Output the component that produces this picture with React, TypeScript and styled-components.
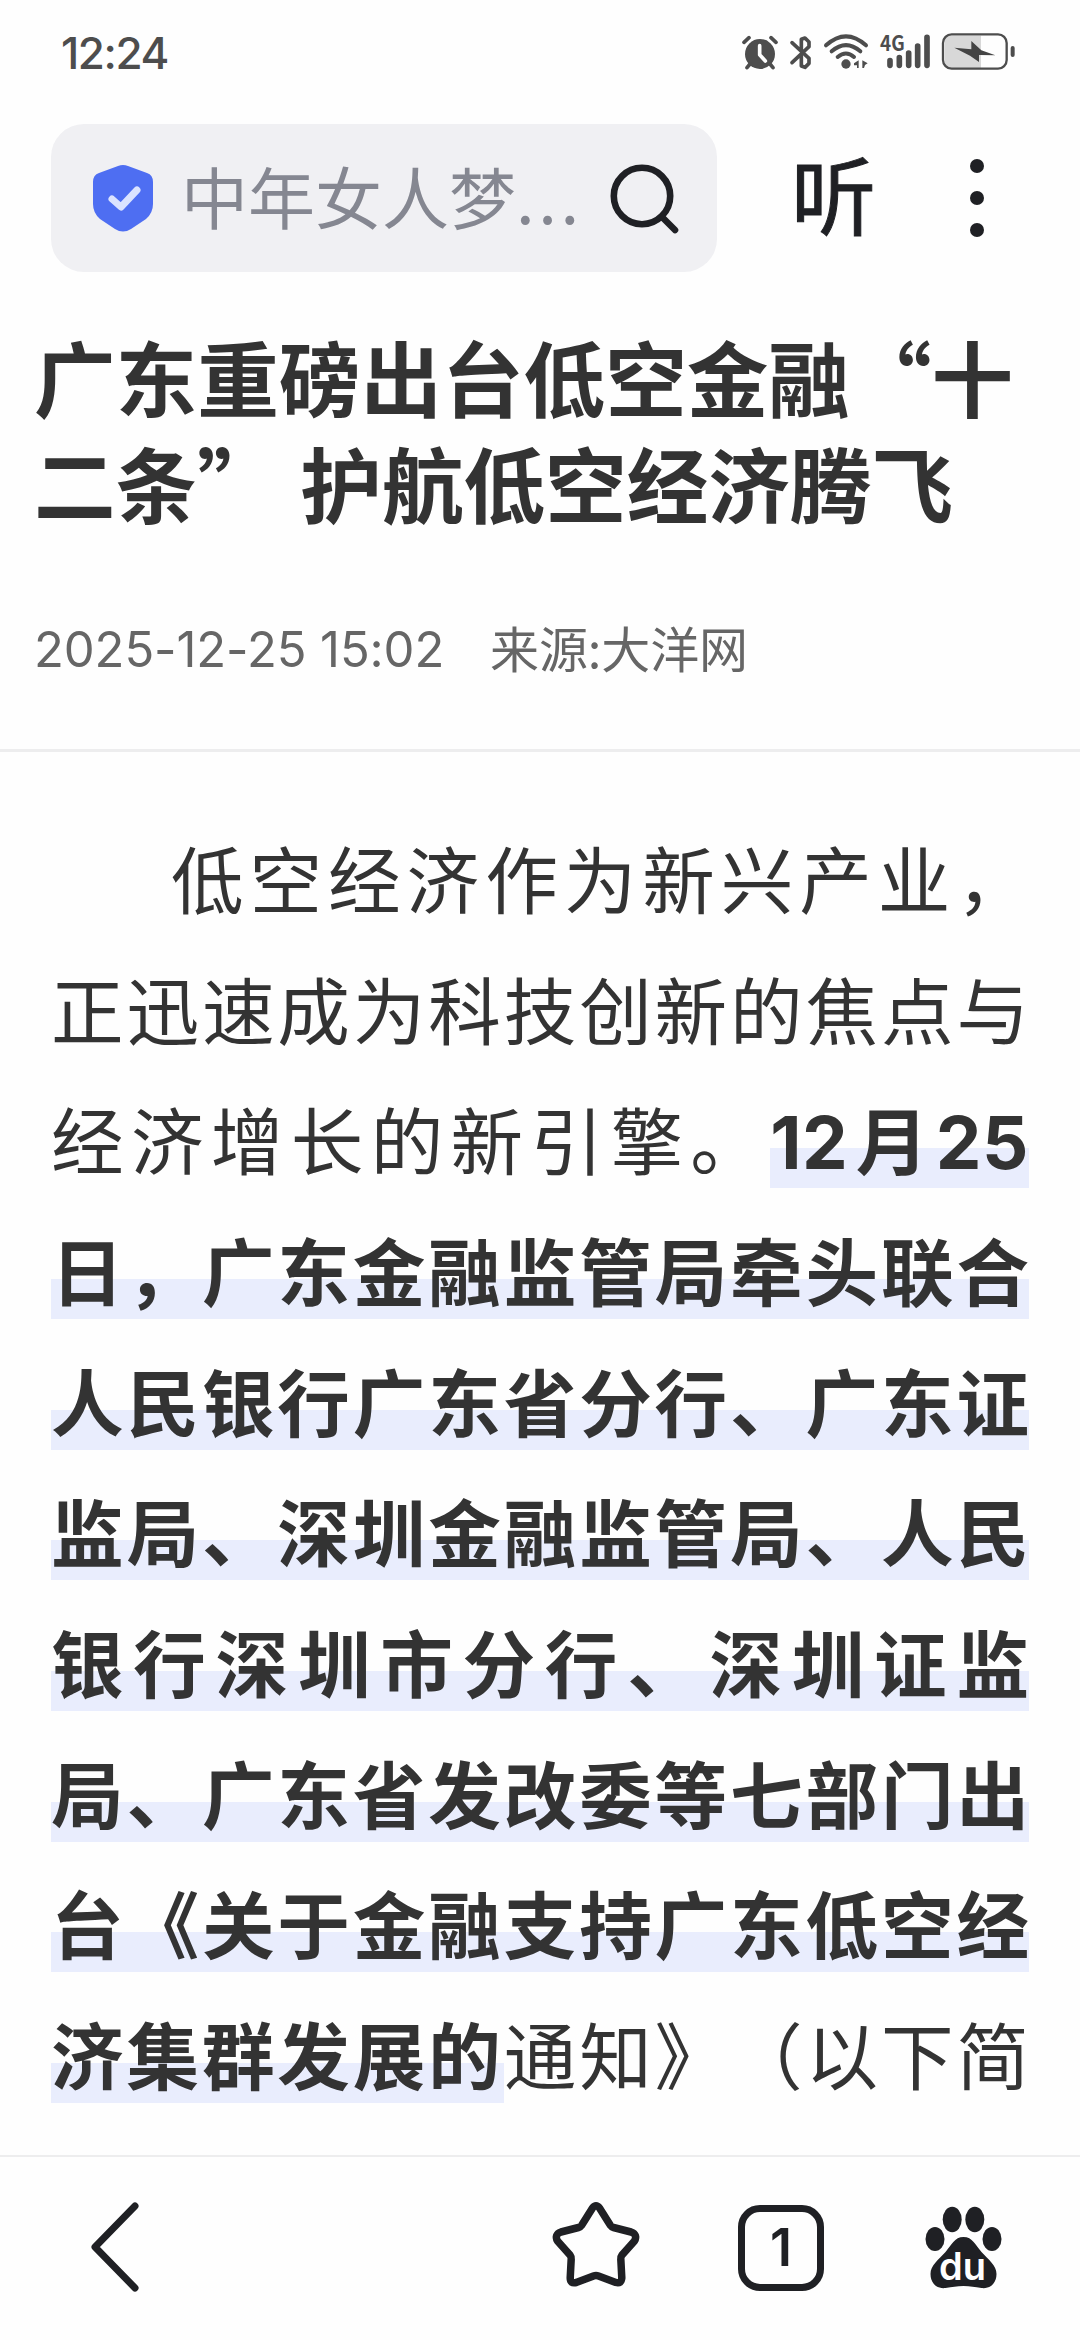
import React from "react";
import styled, { createGlobalStyle } from "styled-components";

const GlobalStyle = createGlobalStyle`
  * { box-sizing: border-box; }
  body { margin: 0; background: #fefefe; }
`;

const Screen = styled.div`
  width: 1080px;
  height: 2340px;
  display: flex;
  flex-direction: column;
  overflow: hidden;
  background: #fefefe;
  color: #333;
  font-family: "Noto Sans CJK SC", sans-serif;
  text-spacing-trim: space-all;
`;

const StatusBar = styled.header`
  height: 104px;
  flex: none;
  display: flex;
  justify-content: space-between;
  padding: 0 62px 0 61px;
  color: #4d4d4d;
`;

const Clock = styled.time`
  font-family: Inter, sans-serif;
  font-size: 44px;
  font-weight: 500;
  line-height: 107px;
  letter-spacing: -1.4px;
`;

const StatusIcons = styled.svg`
  width: 320px;
  height: 90px;
  margin: 10px -22px 0 0;
  flex: none;
`;

const BrowserBar = styled.nav`
  height: 188px;
  flex: none;
  display: flex;
  align-items: center;
  padding: 0 51px;
`;

const SearchBox = styled.div`
  width: 666px;
  height: 148px;
  display: flex;
  align-items: center;
  padding: 0 39px 0 41px;
  border-radius: 33px;
  background: #f0f0f3;
`;

const SearchText = styled.span`
  flex: 1;
  margin-left: 27px;
  padding-bottom: 7px;
  color: #858791;
  font-size: 67px;
  line-height: 100px;
  white-space: nowrap;
`;

const Dots = styled.span`
  letter-spacing: 3.6px;
`;

const Listen = styled.button`
  border: 0;
  padding: 0 0 12px;
  margin: 0 0 0 74px;
  background: none;
  color: #1f2024;
  font: 400 85px/100px "Noto Sans CJK SC", sans-serif;
  -webkit-text-stroke: 1px #1f2024;
`;

const Icon = styled.svg`
  display: block;
  flex: none;
  overflow: visible;
`;

const MoreIcon = styled(Icon)`
  margin-left: 93px;
`;

const Headline = styled.h1`
  margin: 0;
  padding: 31px 34px 0;
  font-size: 81.6px;
  font-weight: 700;
  line-height: 105.5px;
  word-spacing: 3px;
  white-space: nowrap;
`;

const Meta = styled.div`
  display: flex;
  gap: 48px;
  height: 218px;
  padding: 73px 34px 0;
  border-bottom: 3px solid #ededee;
  color: #666;
  font-size: 49px;
  line-height: 80px;
  white-space: nowrap;
`;

const Published = styled.time`
  width: 408px;
  padding-top: 3px;
  font-family: Inter, sans-serif;
  letter-spacing: -0.1px;
`;

const Source = styled.span`
  letter-spacing: -0.1px;
`;

const Article = styled.article`
  flex: 1;
  min-height: 0;
  overflow: hidden;
  padding: 60px 51px 0;
`;

const Line = styled.div<{ $indent?: number }>`
  height: 130.68px;
  padding-left: ${(p) => p.$indent ?? 0}px;
  font-size: 72.6px;
  line-height: 130.68px;
  white-space: nowrap;
  text-align: justify;
  text-align-last: justify;
`;

const Mark = styled.strong`
  font-weight: 700;
  background: linear-gradient(#e9edfd, #e9edfd) no-repeat 0 63px / 100% 40px;
`;

const Digits = styled.span`
  font-family: Inter, sans-serif;
  line-height: 1;
  letter-spacing: 0.6px;
`;

const Toolbar = styled.footer`
  height: 185px;
  flex: none;
  display: grid;
  grid-template-columns: 460px 271px 185px 164px;
  align-items: start;
  border-top: 2px solid #ededee;
  background: #fefefe;
  padding-top: 42px;
`;

const TabCount = styled.div`
  width: 86px;
  height: 86px;
  margin: 6px 0 0 7px;
  display: flex;
  align-items: center;
  justify-content: center;
  border: 7.5px solid #1f2024;
  border-radius: 22px;
  color: #1f2024;
  font: 600 52px/72px Inter, sans-serif;
`;

export default function App() {
  return (
    <Screen lang="zh-CN">
      <GlobalStyle />
      <StatusBar>
        <Clock>12:24</Clock>
        <StatusIcons viewBox="0 0 960 270" fill="none" stroke="#4d4d4d" strokeLinecap="round" strokeLinejoin="round">
          <circle cx="120" cy="132" r="45" fill="#4d4d4d" stroke="none" />
          <path d="M72 97l15-14M168 97l-15-14M90 162l-9 11M150 162l9 11" strokeWidth="11" />
          <path d="M119 107v27l17 19" stroke="#fefefe" strokeWidth="11" />
          <path d="M216 98l51 47v15l-12 12-11-4v-30M216 158l51-48v-14l-12-12-11 4v32" strokeWidth="11" />
          <path d="M318 106q60-54 120 0M335 124q43-37 86 0M353 141q25-21 49 0" strokeWidth="12" />
          <circle cx="378" cy="162" r="14" fill="#4d4d4d" stroke="none" />
          <path d="M416 151v23h-5v-8h-9v-6zM427 151l16 9-8 5-3 9h-5z" fill="#4d4d4d" stroke="none" />
          <text x="480" y="123" fontSize="64" fontWeight="700" fill="#4d4d4d" stroke="none" fontFamily="Noto Sans CJK SC, sans-serif" textLength="74" lengthAdjust="spacingAndGlyphs">4G</text>
          <path d="M510 152v14M538 143v23M566 129v37M593 108v58M621 82v84" strokeWidth="17" />
          <path d="M690 77h93v97h-93a15 15 0 0 1-15-15V92a15 15 0 0 1 15-15z" fill="#d8d8d8" stroke="none" />
          <rect x="669" y="73" width="191" height="103" rx="26" strokeWidth="7" />
          <path d="M703 113l51 5V93l30 28 42 15-49-1v21l-27-19z" fill="#444" stroke="none" />
          <path d="M878 114v21" strokeWidth="12" />
        </StatusIcons>
      </StatusBar>

      <BrowserBar>
        <SearchBox>
          <Icon width="62" height="68" viewBox="0 0 62 68">
            <path d="M26 2q5-2 10 0l19 7q6 2 6 9v22q0 9-7 15L39 65q-8 5-16 0L8 55q-7-6-7-15V18q0-7 6-9z" fill="#4e6ef2" />
            <path d="M20 35l9 8 16-17" fill="none" stroke="#dbe3ff" strokeWidth="7" strokeLinecap="round" strokeLinejoin="round" />
          </Icon>
          <SearchText>中年女人梦<Dots>...</Dots></SearchText>
          <Icon width="68" height="70" viewBox="0 0 68 70" fill="none" stroke="#1f2024" strokeWidth="6.6" strokeLinecap="round">
            <circle cx="32" cy="33" r="28.2" />
            <path d="M53 55l12 12" />
          </Icon>
        </SearchBox>
        <Listen>听</Listen>
        <MoreIcon width="16" height="80" viewBox="0 0 16 80" fill="#1f2024">
          <circle cx="8" cy="8" r="7" />
          <circle cx="8" cy="40" r="7" />
          <circle cx="8" cy="72" r="7" />
        </MoreIcon>
      </BrowserBar>

      <Headline>
        广东重磅出台低空金融“十
        <br />
        二条” 护航低空经济腾飞
      </Headline>
      <Meta>
        <Published>2025-12-25 15:02</Published>
        <Source>来源:大洋网</Source>
      </Meta>

      <Article>
        <Line $indent={120}>低空经济作为新兴产业，</Line>
        <Line>正迅速成为科技创新的焦点与</Line>
        <Line>经济增长的新引擎。<Mark><Digits>12</Digits>月<Digits>25</Digits></Mark></Line>
        <Line><Mark>日，广东金融监管局牵头联合</Mark></Line>
        <Line><Mark>人民银行广东省分行、广东证</Mark></Line>
        <Line><Mark>监局、深圳金融监管局、人民</Mark></Line>
        <Line><Mark>银行深圳市分行、深圳证监</Mark></Line>
        <Line><Mark>局、广东省发改委等七部门出</Mark></Line>
        <Line><Mark>台《关于金融支持广东低空经</Mark></Line>
        <Line><Mark>济集群发展的</Mark>通知》（以下简</Line>
      </Article>

      <Toolbar>
        <Icon width="140" height="92" viewBox="0 0 140 92" fill="none" stroke="#1f2024" strokeWidth="7" strokeLinecap="round" strokeLinejoin="round">
          <path d="M135 7L95 48l40 41" />
        </Icon>
        <Icon width="180" height="92" viewBox="460 2199 180 92" fill="none" stroke="#1f2024" strokeWidth="7.5" strokeLinejoin="round">
          <path d="M592.500 2208q3.500-4.500 7 0l11 17.500q1 1.500 3 2l17.500 4.500q7 2.500 3.500 9l-12.500 14q-1.500 2-1.200 4l1 19q-.5 6-6 4.500l-17.300-6.500q-2.500-1-5 0l-17.300 6.500q-6 1.500-6-4.500l1-19q.3-2-1.200-4l-12.500-14q-3.500-6.500 3.500-9l17.500-4.500q2-.5 3-2z" />
        </Icon>
        <TabCount>1</TabCount>
        <Icon width="90" height="92" viewBox="916 2199 90 92" fill="#1f2024">
          <ellipse cx="952.200" cy="2219.500" rx="9.500" ry="12.800" />
          <ellipse cx="974.800" cy="2219.500" rx="9.500" ry="12.800" />
          <ellipse cx="935" cy="2239" rx="9.500" ry="12" />
          <ellipse cx="992" cy="2239" rx="9.500" ry="12" />
          <path d="M963.500 2237c9 0 12 8 18 15 7 8 15 13 15 22 0 10-7 15-15 14-7-1-11-2-18-2s-11 1-18 2c-8 1-15-4-15-14 0-9 8-14 15-22 6-7 9-15 18-15z" />
          <text x="962.500" y="2280" fontSize="38" fontWeight="600" textAnchor="middle" fill="#fff" fontFamily="Inter, sans-serif">du</text>
        </Icon>
      </Toolbar>
    </Screen>
  );
}
